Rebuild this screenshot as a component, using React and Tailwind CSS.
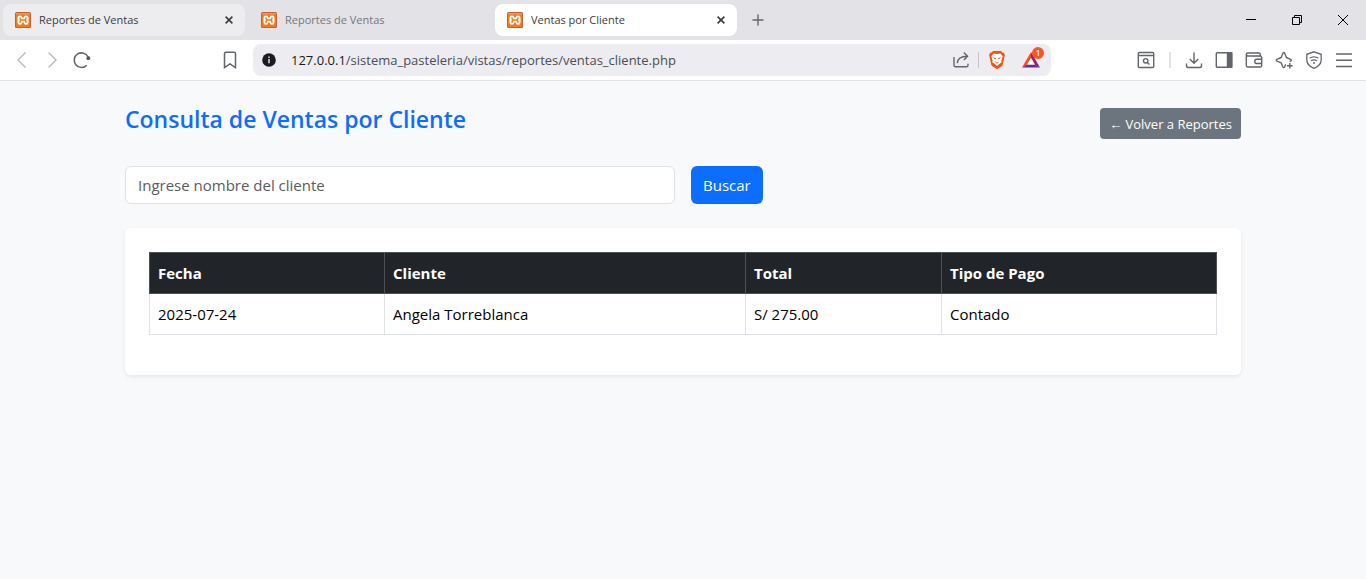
import React from "react";

function Favicon() {
  return (
    <svg className="size-4 shrink-0" viewBox="0 0 16 16" fill="none" aria-hidden="true">
      <rect width="16" height="16" rx="1.5" fill="#c9622a" />
      <rect x="1" y="2" width="14" height="13" rx="1" fill="#f47a20" />
      <rect x="1" y="1" width="14" height="1.5" fill="#e09a72" />
      <g strokeLinecap="round" strokeLinejoin="round">
        <path d="M4.900 5.800v4.600M11.100 5.800v4.600M5 8h6" stroke="#fff" strokeWidth="4.800" />
        <path d="M5 6L5.600 8 5 10.200M11 6L10.400 8 11 10.200M5.600 8h4.800" stroke="#f47a20" strokeWidth="1.500" />
      </g>
    </svg>
  );
}

function CloseIcon() {
  return (
    <svg className="size-2" viewBox="0 0 8 8" fill="none" stroke="#3b3b40" strokeWidth="1.6" aria-hidden="true">
      <path d="M.6.6l6.8 6.8M7.4.6L.6 7.4" />
    </svg>
  );
}

function Tab({ title, look, text, closable }) {
  return (
    <div className={"flex h-8 w-[242px] shrink-0 items-center gap-2 rounded-lg px-3 " + look}>
      <Favicon />
      <span className={"flex-1 truncate text-[11px] leading-4 " + text}>{title}</span>
      {closable && (
        <button type="button" aria-label={"Cerrar " + title} className="flex size-2 items-center justify-center">
          <CloseIcon />
        </button>
      )}
    </div>
  );
}

function Glyph({ children, stroke = "#62656a", width = 1.4 }) {
  return (
    <svg className="size-5" viewBox="0 0 20 20" fill="none" stroke={stroke} strokeWidth={width} aria-hidden="true">
      {children}
    </svg>
  );
}

function IconButton({ label, children }) {
  return (
    <button type="button" aria-label={label} className="flex size-5 shrink-0 items-center justify-center">
      {children}
    </button>
  );
}

function TabStrip() {
  return (
    <div className="flex h-10 items-center bg-[#e3e2e7] pl-[3px]">
      <div className="flex gap-1">
        <Tab title="Reportes de Ventas" look="bg-[#ededef]" text="text-[#3b3b40]" closable />
        <Tab title="Reportes de Ventas" look="" text="text-[#77767c]" />
        <Tab title="Ventas por Cliente" look="bg-white" text="text-[#3b3b40]" closable />
      </div>
      <button type="button" aria-label="Nueva pestaña" className="ml-[15px] flex size-3 items-center justify-center">
        <svg className="size-3" viewBox="0 0 12 12" stroke="#66656b" strokeWidth="1.4" aria-hidden="true">
          <path d="M6 .5v11M.5 6h11" />
        </svg>
      </button>
      <div className="ml-auto flex">
        <button type="button" aria-label="Minimizar" className="flex h-10 w-[46px] items-center justify-center">
          <svg className="size-3" viewBox="0 0 12 12" stroke="#000" aria-hidden="true">
            <path d="M1 5.5h10" />
          </svg>
        </button>
        <button type="button" aria-label="Restaurar" className="flex h-10 w-[46px] items-center justify-center">
          <svg className="size-3" viewBox="0 0 12 12" stroke="#000" fill="none" aria-hidden="true">
            <path d="M1.5 3.5h7v7h-7zM3.5 3.5v-2h7v7h-2" />
          </svg>
        </button>
        <button type="button" aria-label="Cerrar ventana" className="flex h-10 w-[46px] items-center justify-center">
          <svg className="size-3" viewBox="0 0 12 12" stroke="#000" aria-hidden="true">
            <path d="M1 1l10 10M11 1L1 11" />
          </svg>
        </button>
      </div>
    </div>
  );
}

function Toolbar() {
  return (
    <div className="flex h-[41px] items-center border-b border-[#e3e2e7] bg-white px-3">
      <div className="flex gap-[10px]">
        <IconButton label="Atrás">
          <Glyph stroke="#b9b9bd">
            <path d="M13.5 2.5L6 10l7.5 7.5" />
          </Glyph>
        </IconButton>
        <IconButton label="Adelante">
          <Glyph stroke="#b9b9bd">
            <path d="M6.5 2.5L14 10l-7.5 7.5" />
          </Glyph>
        </IconButton>
        <IconButton label="Recargar">
          <Glyph width={1.6}>
            <path d="M14.8 15.2A7.3 7.3 0 1 1 16.2 7.2" />
            <circle cx="16.3" cy="8.2" r="1.9" fill="#55585d" stroke="none" />
          </Glyph>
        </IconButton>
      </div>
      <div className="ml-32 flex">
        <IconButton label="Agregar a marcadores">
          <Glyph width={1.5}>
            <path d="M4.5 3.6Q4.5 2.2 5.9 2.2h8.2q1.4 0 1.4 1.4v14L10 13.9l-5.5 3.7z" />
          </Glyph>
        </IconButton>
      </div>
      <div className="ml-[13px] flex h-8 max-w-[798px] flex-1 items-center rounded-lg bg-[#ededf1] pr-[10px] pl-2">
        <svg className="size-4 shrink-0" viewBox="0 0 16 16" aria-hidden="true">
          <circle cx="8" cy="8" r="6.8" fill="#1b1b20" />
          <path d="M8 7v4.2M8 4.4v1.5" stroke="#ededf1" strokeWidth="1.4" />
        </svg>
        <div className="ml-[14px] flex-1 truncate text-[13px] leading-5 text-[#4c4c54]">
          <span className="text-[#1b1b20]">127.0.0.1</span>/sistema_pasteleria/vistas/reportes/ventas_cliente.php
        </div>
        <IconButton label="Compartir">
          <Glyph>
            <path d="M3 7v8.2q0 1.6 1.6 1.6h10.8q1.6 0 1.6-1.6v-1.400M6.300 13.300C6.500 9 9 6.300 16.400 6.300M12.800 2.500l3.800 3.800-3.800 3.800" />
          </Glyph>
        </IconButton>
        <div className="mr-2 ml-[7px] h-4 w-px bg-[#c4c4c9]" />
        <IconButton label="Escudo de Brave">
          <svg className="size-5" viewBox="0 0 20 20" aria-hidden="true">
            <path d="M6 1h8l1.300 1.500 1.600.2 1 2.500-.5 1.800-1.600 7.500q-.4 1.300-1.500 2L10 19.300l-4.300-2.800q-1.100-.7-1.500-2L2.600 7l-.5-1.800 1-2.500 1.600-.2z" fill="#fb5012" />
            <path d="M6.500 3.500l3.500.5 3.500-.5 2.200 2.800-1.300 4.100.3 1.900-2.200 1.500L10 15.900l-2.500-2.100-2.200-1.500.3-1.900-1.300-4.100z" fill="#fff" />
            <path d="M6.300 7.500l2.600.7-.8 1zM13.700 7.500l-2.600.7.8 1zM8.300 11.900L10 12.700l1.700-.8L10 13.400z" fill="#fb5012" stroke="#fb5012" strokeWidth=".3" />
          </svg>
        </IconButton>
        <button type="button" aria-label="Brave Rewards" className="relative ml-[14px] flex size-5 shrink-0 items-center justify-center">
          <svg className="size-5" viewBox="0 0 20 20" aria-hidden="true">
            <path d="M10 2L1 17.500l5.500-2.700L10 8.500z" fill="#ff4724" />
            <path d="M10 2l9 15.500-5.500-2.700L10 8.500z" fill="#9e1f63" />
            <path d="M1 17.500h18l-5.500-3h-7z" fill="#662d91" />
            <path d="M10 7.800L6 14.600h8z" fill="#fff" />
          </svg>
          <span className="absolute -top-[3px] left-[11px] flex size-3 items-center justify-center rounded-full bg-[#fb542b] text-[8px] leading-3 font-semibold text-white">
            1
          </span>
        </button>
      </div>
      <div className="ml-auto flex items-center">
        <IconButton label="Buscar en la página">
          <Glyph>
            <path d="M3.400 2.500h13.200q1.100 0 1.100 1.100v12.800q0 1.100-1.100 1.100H3.400q-1.100 0-1.100-1.100V3.600q0-1.100 1.100-1.100zM2.300 5.500h15.400" />
            <circle cx="9.700" cy="10.800" r="2.200" />
            <path d="M11.400 12.500l2 2" />
          </Glyph>
        </IconButton>
        <div className="mx-[13px] h-4 w-0.5 bg-[#e1e1e7]" />
        <div className="flex gap-[10px]">
          <IconButton label="Descargas">
            <Glyph>
              <path d="M10 2.500v10.500M5.800 9l4.200 4.200L14.200 9M2.500 13.500v2.200q0 1.800 1.800 1.800h11.400q1.800 0 1.800-1.800v-2.200" />
            </Glyph>
          </IconButton>
          <IconButton label="Panel lateral">
            <Glyph>
              <rect x="2.300" y="2.700" width="15.400" height="14.600" rx="1" />
              <path d="M13.500 2.700h4.200v14.600h-4.200z" fill="#62656a" />
            </Glyph>
          </IconButton>
          <IconButton label="Cartera">
            <Glyph>
              <path d="M16.300 6V4.500q0-1.500-1.500-1.500H3.900Q2.300 3 2.300 4.600v10.800q0 1.600 1.600 1.600h12.200q1.600 0 1.600-1.600V7.600Q17.700 6 16.100 6H3.900Q2.300 6 2.300 4.600M17.700 9.300h-5q-1.900 0-1.900 2.100t1.900 2.100h5" />
            </Glyph>
          </IconButton>
          <IconButton label="Leo">
            <Glyph>
              <path d="M11.700 14.300L10.700 16.800Q9.800 18.400 8.900 16.800L7.200 12.900 3 11.100Q1.400 10.200 3 9.300L7.200 7.500 8.900 3.300Q9.800 1.700 10.700 3.300L12.400 7.500 16.600 9.300Q18.200 10.200 16.600 11.100L15.600 11.500M15.800 13v5.600M13 15.800h5.600" strokeLinejoin="round" />
            </Glyph>
          </IconButton>
          <IconButton label="VPN">
            <Glyph width={1.300}>
              <path d="M10 1.800l7.200 2.500v5.400q0 5.800-7.200 8.700-7.200-2.900-7.200-8.700V4.300z" />
              <path d="M5.600 8.300q4.400-3 8.800 0M7 10.800q3-2 6 0" />
              <circle cx="10" cy="13" r="1" fill="#62656a" stroke="none" />
            </Glyph>
          </IconButton>
          <IconButton label="Menú">
            <Glyph width={1.500}>
              <path d="M2 4h16M2 10.200h16M2 16.500h16" />
            </Glyph>
          </IconButton>
        </div>
      </div>
    </div>
  );
}

const columns = [
  { name: "Fecha", width: "w-[235px]" },
  { name: "Cliente", width: "w-[361px]" },
  { name: "Total", width: "w-[196px]" },
  { name: "Tipo de Pago", width: "w-auto" },
];
const sales = [["2025-07-24", "Angela Torreblanca", "S/ 275.00", "Contado"]];

export default function App() {
  return (
    <div className="flex min-h-screen flex-col bg-[#f8f9fb] font-['Open_Sans','Noto_Sans',sans-serif] text-[15px] leading-6 text-[#212529]">
      <header>
        <TabStrip />
        <Toolbar />
      </header>
      <main className="mx-auto w-full max-w-[1140px] px-3 pt-6">
        <div className="mb-6 flex items-center justify-between">
          <h1 className="mb-2 text-[23px] leading-[29px] font-semibold text-[#0d6efd]">Consulta de Ventas por Cliente</h1>
          <a href="#reportes" className="flex h-[31px] items-center rounded bg-[#6c757d] px-[9px] text-[13px] text-white">
            ← Volver a Reportes
          </a>
        </div>
        <form className="mb-6 grid grid-cols-2 gap-4" onSubmit={(e) => e.preventDefault()}>
          <input
            type="text"
            aria-label="Nombre del cliente"
            placeholder="Ingrese nombre del cliente"
            className="h-[38px] w-full rounded-md border border-[#dee2e6] bg-white px-3 placeholder:text-[#595c5f]"
          />
          <button type="submit" className="h-[38px] justify-self-start rounded-md bg-[#0d6efd] px-3 text-white">
            Buscar
          </button>
        </form>
        <section className="rounded-md bg-white p-6 shadow-[0_2px_4px_rgba(0,0,0,0.075)]">
          <table className="mb-4 w-full table-fixed border-collapse text-left text-black">
            <thead>
              <tr className="bg-[#212529] text-white">
                {columns.map((c) => (
                  <th key={c.name} scope="col" className={"border border-[#4d5154] p-2 font-bold " + c.width}>
                    {c.name}
                  </th>
                ))}
              </tr>
            </thead>
            <tbody>
              {sales.map((row) => (
                <tr key={row[0]}>
                  {row.map((cell) => (
                    <td key={cell} className="border border-[#dee2e6] p-2">
                      {cell}
                    </td>
                  ))}
                </tr>
              ))}
            </tbody>
          </table>
        </section>
      </main>
    </div>
  );
}
